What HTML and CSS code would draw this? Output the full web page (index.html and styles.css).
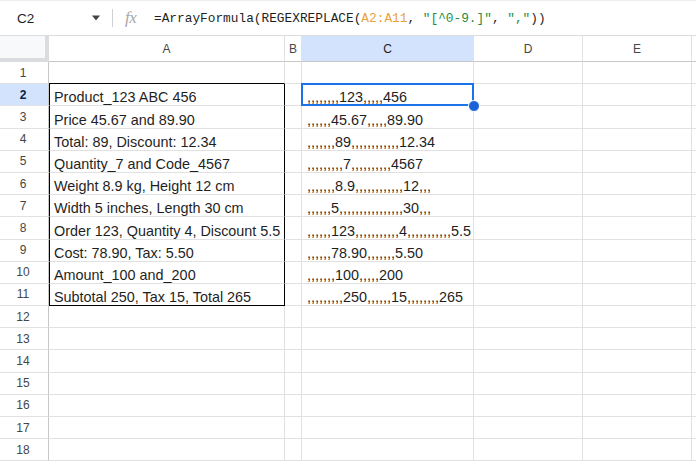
FILE: index.html
```html
<!DOCTYPE html>
<html>
<head>
<meta charset="utf-8">
<link rel="stylesheet" href="styles.css">
</head>
<body>
<div class="fbar">
  <div class="namebox">C2</div>
  <div class="caret">
    <svg width="10" height="6" viewBox="0 0 10 6"><path d="M1 0.5 L9 0.5 L5 5.5 Z" fill="#444"/></svg>
  </div>
  <div class="sep"></div>
  <div class="fx">fx</div>
  <div class="formula">=ArrayFormula(REGEXREPLACE(<span class="ref">A2:A11</span>, <span class="str">"[^0-9.]"</span>, <span class="str">","</span>))</div>
</div>
<div class="sheet">
  <div class="corner"></div>
  <div class="ch">A</div>
  <div class="ch">B</div>
  <div class="ch sel">C</div>
  <div class="ch">D</div>
  <div class="ch">E</div>
  <div class="ch last"></div>

  <div class="rh">1</div><div class="c a top"></div><div class="c"></div><div class="c"></div><div class="c"></div><div class="c"></div><div class="c last"></div>
  <div class="rh rsel">2</div><div class="c a box">Product_123 ABC 456</div><div class="c"></div><div class="c cc cur">,,,,,,,,123,,,,,456<div class="selbox"></div><div class="handle"></div></div><div class="c"></div><div class="c"></div><div class="c last"></div>
  <div class="rh">3</div><div class="c a box">Price 45.67 and 89.90</div><div class="c"></div><div class="c cc">,,,,,,45.67,,,,,89.90</div><div class="c"></div><div class="c"></div><div class="c last"></div>
  <div class="rh">4</div><div class="c a box">Total: 89, Discount: 12.34</div><div class="c"></div><div class="c cc">,,,,,,,89,,,,,,,,,,,,12.34</div><div class="c"></div><div class="c"></div><div class="c last"></div>
  <div class="rh">5</div><div class="c a box">Quantity_7 and Code_4567</div><div class="c"></div><div class="c cc">,,,,,,,,,7,,,,,,,,,,4567</div><div class="c"></div><div class="c"></div><div class="c last"></div>
  <div class="rh">6</div><div class="c a box">Weight 8.9 kg, Height 12 cm</div><div class="c"></div><div class="c cc">,,,,,,,8.9,,,,,,,,,,,,12,,,</div><div class="c"></div><div class="c"></div><div class="c last"></div>
  <div class="rh">7</div><div class="c a box">Width 5 inches, Length 30 cm</div><div class="c"></div><div class="c cc">,,,,,,5,,,,,,,,,,,,,,,,30,,,</div><div class="c"></div><div class="c"></div><div class="c last"></div>
  <div class="rh">8</div><div class="c a box">Order 123, Quantity 4, Discount 5.5</div><div class="c"></div><div class="c cc">,,,,,,123,,,,,,,,,,,4,,,,,,,,,,,5.5</div><div class="c"></div><div class="c"></div><div class="c last"></div>
  <div class="rh">9</div><div class="c a box">Cost: 78.90, Tax: 5.50</div><div class="c"></div><div class="c cc">,,,,,,78.90,,,,,,,5.50</div><div class="c"></div><div class="c"></div><div class="c last"></div>
  <div class="rh">10</div><div class="c a box">Amount_100 and_200</div><div class="c"></div><div class="c cc">,,,,,,,100,,,,,200</div><div class="c"></div><div class="c"></div><div class="c last"></div>
  <div class="rh">11</div><div class="c a box bottom">Subtotal 250, Tax 15, Total 265</div><div class="c"></div><div class="c cc">,,,,,,,,,250,,,,,,15,,,,,,,,265</div><div class="c"></div><div class="c"></div><div class="c last"></div>
  <div class="rh">12</div><div class="c"></div><div class="c"></div><div class="c"></div><div class="c"></div><div class="c"></div><div class="c last"></div>
  <div class="rh">13</div><div class="c"></div><div class="c"></div><div class="c"></div><div class="c"></div><div class="c"></div><div class="c last"></div>
  <div class="rh">14</div><div class="c"></div><div class="c"></div><div class="c"></div><div class="c"></div><div class="c"></div><div class="c last"></div>
  <div class="rh">15</div><div class="c"></div><div class="c"></div><div class="c"></div><div class="c"></div><div class="c"></div><div class="c last"></div>
  <div class="rh">16</div><div class="c"></div><div class="c"></div><div class="c"></div><div class="c"></div><div class="c"></div><div class="c last"></div>
  <div class="rh">17</div><div class="c"></div><div class="c"></div><div class="c"></div><div class="c"></div><div class="c"></div><div class="c last"></div>
  <div class="rh">18</div><div class="c"></div><div class="c"></div><div class="c"></div><div class="c"></div><div class="c"></div><div class="c last"></div>
</div>
</body>
</html>
```

FILE: styles.css
```css
* { box-sizing: border-box; }
html, body { margin: 0; padding: 0; background: #fff; }
body {
  width: 696px;
  height: 464px;
  overflow: hidden;
  font-family: "Liberation Sans", Arial, sans-serif;
  color: #1f1f1f;
}
.fbar {
  height: 36px;
  display: flex;
  align-items: center;
  border-top: 1px solid #eeeeee;
  border-bottom: 1px solid #dcdcdc;
}
.namebox {
  width: 88px;
  padding-left: 17px;
  font-size: 13.5px;
  color: #1f1f1f;
}
.caret {
  width: 20px;
  display: flex;
  align-items: center;
  padding-left: 3px;
}
.sep {
  width: 1px;
  height: 18px;
  background: #d0d0d0;
  margin-left: 4px;
}
.fx {
  font-family: "Liberation Serif", "Times New Roman", serif;
  font-style: italic;
  font-size: 17px;
  color: #a8a8a8;
  margin-left: 12px;
  width: 29px;
  letter-spacing: -0.5px;
}
.formula {
  font-family: "Liberation Mono", "DejaVu Sans Mono", monospace;
  font-size: 12.8px;
  color: #1f1f1f;
  white-space: nowrap;
}
.ref { color: #e8a33d; }
.str { color: #1e8e3e; }

.sheet {
  display: grid;
  grid-template-columns: 49px 236px 17px 172px 109px 109px 4px;
  grid-template-rows: 26px repeat(18, 22.2px);
}
.corner {
  background: #f8f9fa;
  border-right: 4px solid #dadce0;
  border-bottom: 4px solid #dadce0;
}
.ch {
  display: flex;
  align-items: center;
  justify-content: center;
  font-size: 12px;
  color: #444746;
  border-right: 1px solid #e1e1e1;
  border-bottom: 1px solid #c7c7c7;
  background: #fff;
}
.ch.sel {
  background: #d3e3fd;
  color: #1f1f1f;
}
.rh {
  display: flex;
  align-items: center;
  justify-content: center;
  font-size: 12px;
  color: #444746;
  border-right: 1px solid #c7c7c7;
  border-bottom: 1px solid #e1e1e1;
  padding-right: 2px;
}
.rh.rsel {
  background: #d3e3fd;
  color: #0b1f44;
  font-weight: bold;
}
.c {
  position: relative;
  border-right: 1px solid #e1e1e1;
  border-bottom: 1px solid #e1e1e1;
  font-size: 14.4px;
  color: #1f1f1f;
  white-space: nowrap;
  display: flex;
  align-items: flex-end;
  padding: 0 0 0 4px;
}
.last { border-right: none; }
.c.top { border-bottom-color: #000; }
.c.box {
  border-left: 1px solid #000;
  border-right-color: #000;
  padding-left: 4px;
}
.c.bottom { border-bottom-color: #000; }
.cc { padding-left: 5px; }
.cur { z-index: 2; }
.selbox {
  position: absolute;
  left: -1px;
  top: -1px;
  right: -1px;
  bottom: -1px;
  border: 2px solid #1a73e8;
  pointer-events: none;
}
.handle {
  position: absolute;
  right: -7px;
  bottom: -7px;
  width: 10px;
  height: 10px;
  border-radius: 50%;
  background: #1a62d8;
  border: 1px solid #fff;
  box-sizing: content-box;
}
```
